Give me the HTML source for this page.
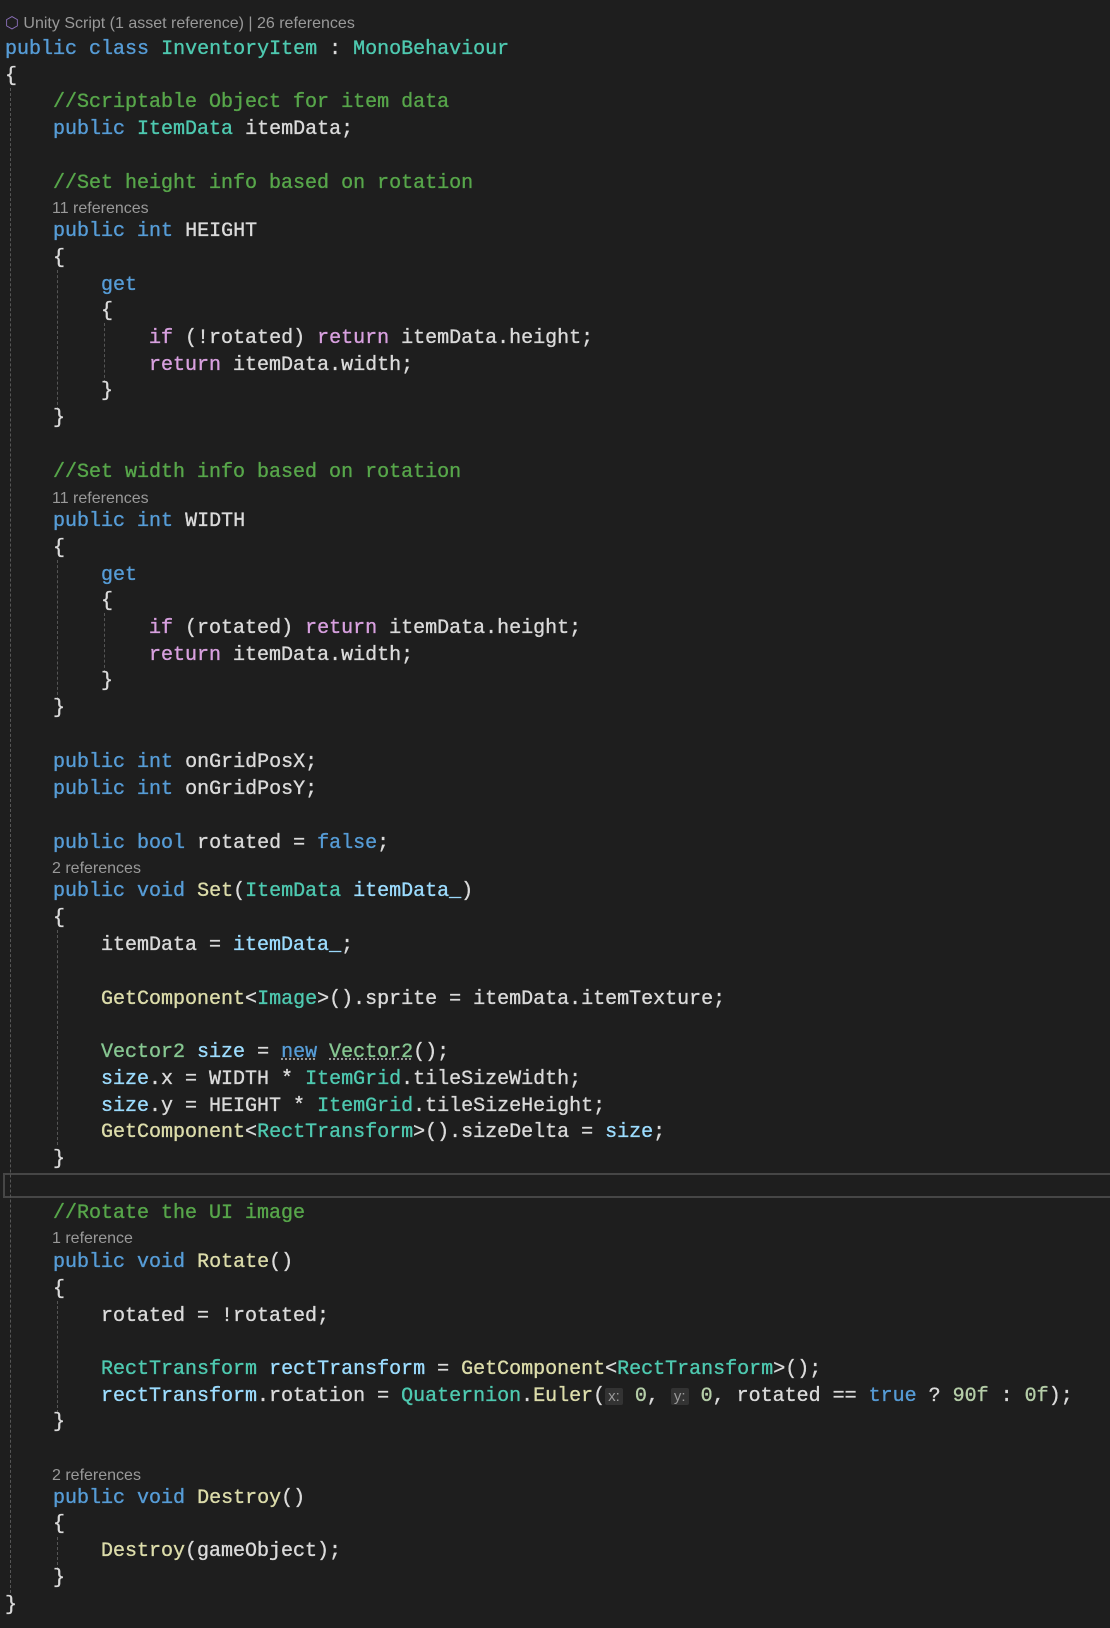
<!DOCTYPE html>
<html><head><meta charset="utf-8"><style>
html,body{margin:0;padding:0;background:#1e1e1e;width:1110px;height:1628px;overflow:hidden;position:relative}
#w{position:absolute;left:0;top:2px;width:1110px;height:1626px}
.l{position:absolute;left:5px;height:28px;line-height:28px;font-family:"Liberation Mono",monospace;font-size:20px;color:#dadada;white-space:pre;-webkit-text-stroke:0.35px currentColor}
.c{position:absolute;left:52px;height:20px;line-height:20px;font-family:"Liberation Sans",sans-serif;font-size:16px;color:#999;white-space:pre}
.k{color:#569cd6}.t{color:#4ec9b0}.cm{color:#57a64a}.m{color:#dcdcaa}.p{color:#d8a0df}.n{color:#b5cea8}.v{color:#9cdcfe}.s{color:#86c691}
.h{background:#333;color:#999;font-size:15px;font-family:"Liberation Sans",sans-serif;padding:0 3px;border-radius:2px;-webkit-text-stroke:0}
.u{text-decoration:underline dotted #999}
.g{position:absolute;width:0;border-left:1px dashed #555}
</style></head><body>
<div style="position:absolute;left:3px;top:1173px;width:1110px;height:21px;border:2px solid #464646;border-right:none"></div>
<div id="w">
<div class="g" style="left:10px;top:86px;height:1505px"></div>
<div class="g" style="left:57px;top:268px;height:140px"></div>
<div class="g" style="left:104px;top:321px;height:60px"></div>
<div class="g" style="left:57px;top:558px;height:140px"></div>
<div class="g" style="left:104px;top:611px;height:60px"></div>
<div class="g" style="left:57px;top:928px;height:215px"></div>
<div class="g" style="left:57px;top:1299px;height:112px"></div>
<div class="g" style="left:57px;top:1535px;height:33px"></div>

<div class="c" style="left:5px;top:12px"><span style="color:#8a6fb8">⬡</span> Unity Script (1 asset reference) | 26 references</div>
<div class="l" style="top:34px"><span class="k">public</span> <span class="k">class</span> <span class="t">InventoryItem</span> : <span class="t">MonoBehaviour</span></div>
<div class="l" style="top:61px">{</div>
<div class="l" style="top:87px">    <span class="cm">//Scriptable Object for item data</span></div>
<div class="l" style="top:114px">    <span class="k">public</span> <span class="t">ItemData</span> itemData;</div>
<div class="l" style="top:168px">    <span class="cm">//Set height info based on rotation</span></div>
<div class="c" style="top:197px">11 references</div>
<div class="l" style="top:216px">    <span class="k">public</span> <span class="k">int</span> HEIGHT</div>
<div class="l" style="top:243px">    {</div>
<div class="l" style="top:270px">        <span class="k">get</span></div>
<div class="l" style="top:296px">        {</div>
<div class="l" style="top:323px">            <span class="p">if</span> (!rotated) <span class="p">return</span> itemData.height;</div>
<div class="l" style="top:350px">            <span class="p">return</span> itemData.width;</div>
<div class="l" style="top:376px">        }</div>
<div class="l" style="top:403px">    }</div>
<div class="l" style="top:457px">    <span class="cm">//Set width info based on rotation</span></div>
<div class="c" style="top:487px">11 references</div>
<div class="l" style="top:506px">    <span class="k">public</span> <span class="k">int</span> WIDTH</div>
<div class="l" style="top:533px">    {</div>
<div class="l" style="top:560px">        <span class="k">get</span></div>
<div class="l" style="top:586px">        {</div>
<div class="l" style="top:613px">            <span class="p">if</span> (rotated) <span class="p">return</span> itemData.height;</div>
<div class="l" style="top:640px">            <span class="p">return</span> itemData.width;</div>
<div class="l" style="top:666px">        }</div>
<div class="l" style="top:693px">    }</div>
<div class="l" style="top:747px">    <span class="k">public</span> <span class="k">int</span> onGridPosX;</div>
<div class="l" style="top:774px">    <span class="k">public</span> <span class="k">int</span> onGridPosY;</div>
<div class="l" style="top:828px">    <span class="k">public</span> <span class="k">bool</span> rotated = <span class="k">false</span>;</div>
<div class="c" style="top:857px">2 references</div>
<div class="l" style="top:876px">    <span class="k">public</span> <span class="k">void</span> <span class="m">Set</span>(<span class="t">ItemData</span> <span class="v">itemData_</span>)</div>
<div class="l" style="top:903px">    {</div>
<div class="l" style="top:930px">        itemData = <span class="v">itemData_</span>;</div>
<div class="l" style="top:984px">        <span class="m">GetComponent</span>&lt;<span class="t">Image</span>&gt;().sprite = itemData.itemTexture;</div>
<div class="l" style="top:1037px">        <span class="s">Vector2</span> <span class="v">size</span> = <span class="k u">new</span> <span class="s u">Vector2</span>();</div>
<div class="l" style="top:1064px">        <span class="v">size</span>.x = WIDTH * <span class="t">ItemGrid</span>.tileSizeWidth;</div>
<div class="l" style="top:1091px">        <span class="v">size</span>.y = HEIGHT * <span class="t">ItemGrid</span>.tileSizeHeight;</div>
<div class="l" style="top:1117px">        <span class="m">GetComponent</span>&lt;<span class="t">RectTransform</span>&gt;().sizeDelta = <span class="v">size</span>;</div>
<div class="l" style="top:1144px">    }</div>
<div class="l" style="top:1198px">    <span class="cm">//Rotate the UI image</span></div>
<div class="c" style="top:1227px">1 reference</div>
<div class="l" style="top:1247px">    <span class="k">public</span> <span class="k">void</span> <span class="m">Rotate</span>()</div>
<div class="l" style="top:1274px">    {</div>
<div class="l" style="top:1301px">        rotated = !rotated;</div>
<div class="l" style="top:1354px">        <span class="t">RectTransform</span> <span class="v">rectTransform</span> = <span class="m">GetComponent</span>&lt;<span class="t">RectTransform</span>&gt;();</div>
<div class="l" style="top:1381px">        <span class="v">rectTransform</span>.rotation = <span class="t">Quaternion</span>.<span class="m">Euler</span>(<span class="h">x:</span> <span class="n">0</span>, <span class="h">y:</span> <span class="n">0</span>, rotated == <span class="k">true</span> ? <span class="n">90f</span> : <span class="n">0f</span>);</div>
<div class="l" style="top:1407px">    }</div>
<div class="c" style="top:1464px">2 references</div>
<div class="l" style="top:1483px">    <span class="k">public</span> <span class="k">void</span> <span class="m">Destroy</span>()</div>
<div class="l" style="top:1509px">    {</div>
<div class="l" style="top:1536px">        <span class="m">Destroy</span>(gameObject);</div>
<div class="l" style="top:1563px">    }</div>
<div class="l" style="top:1590px">}</div>
</div>
</body></html>
